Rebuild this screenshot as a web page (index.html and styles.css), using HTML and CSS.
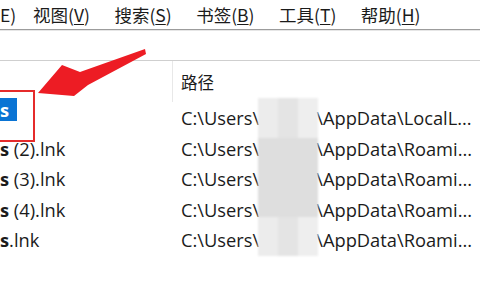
FILE: index.html
```html
<!DOCTYPE html>
<html lang="zh-CN">
<head>
    <meta charset="UTF-8">
    <title>搜索结果</title>
    <link rel="stylesheet" href="styles.css">
</head>
<body>
    <div class="window">
        <nav class="menubar">
            <span class="menu-item cut">E)</span>
            <span class="menu-item">视图(<u>V</u>)</span>
            <span class="menu-item">搜索(<u>S</u>)</span>
            <span class="menu-item">书签(<u>B</u>)</span>
            <span class="menu-item">工具(<u>T</u>)</span>
            <span class="menu-item">帮助(<u>H</u>)</span>
        </nav>
        <div class="toolbar"></div>

        <div class="list">
            <div class="list-head">
                <div class="col-name"></div>
                <div class="col-path">路径</div>
            </div>
            <div class="row">
                <div class="col-name"><b class="selected">s</b></div>
                <div class="col-path">C:\Users\<span class="hidden-user">xxxxx</span>\AppData\LocalL...</div>
            </div>
            <div class="row">
                <div class="col-name"><b>s</b> (2).lnk</div>
                <div class="col-path">C:\Users\<span class="hidden-user">xxxxx</span>\AppData\Roami...</div>
            </div>
            <div class="row">
                <div class="col-name"><b>s</b> (3).lnk</div>
                <div class="col-path">C:\Users\<span class="hidden-user">xxxxx</span>\AppData\Roami...</div>
            </div>
            <div class="row">
                <div class="col-name"><b>s</b> (4).lnk</div>
                <div class="col-path">C:\Users\<span class="hidden-user">xxxxx</span>\AppData\Roami...</div>
            </div>
            <div class="row">
                <div class="col-name"><b>s</b>.lnk</div>
                <div class="col-path">C:\Users\<span class="hidden-user">xxxxx</span>\AppData\Roami...</div>
            </div>
        </div>

        <!-- annotation -->
        <div class="mosaic">
            <span></span><span></span><span></span>
            <span></span><span></span><span></span>
            <span></span><span></span><span></span>
            <span></span><span></span><span></span>
        </div>
        <div class="mark-box"></div>
        <svg class="mark-arrow" width="160" height="110" viewBox="0 0 160 110">
            <polygon points="145,49 80,72 62,65 38,93 74,96 88,85 146,54" fill="#ed1c24"/>
        </svg>
    </div>
</body>
</html>
```

FILE: styles.css
```css
body {
    margin: 0;
    background: #fff;
    font-family: "Open Sans", "Noto Sans CJK SC", sans-serif;
    color: #1b1b1b;
}
.window {
    position: relative;
    width: 480px;
    height: 300px;
    overflow: hidden;
}
.menubar {
    display: flex;
    gap: 24.5px;
    height: 29px;
    align-items: center;
    font-family: "Noto Sans CJK SC", sans-serif;
    font-size: 17.5px;
    border-bottom: 1px solid #9c9c9c;
    box-shadow: 0 1px 0 #e6e6e6;
}
.menu-item {
    white-space: nowrap;
}
.menu-item u {
    text-decoration-thickness: 1px;
    text-underline-offset: 2px;
}
.menu-item.cut {
    width: 8.5px;
}
.toolbar {
    height: 30px;
    border-bottom: 1px solid #cfcfcf;
}
.list {
    font-size: 18.3px;
}
.list-head,
.row {
    display: grid;
    grid-template-columns: 172px 1fr;
}
.list-head {
    height: 41px;
}
.list-head .col-path {
    border-left: 1px solid #e8e8e8;
    padding: 9px 0 0 8px;
    font-family: "Noto Sans CJK SC", sans-serif;
    font-size: 16.5px;
}
.row {
    height: 30.5px;
    line-height: 30px;
    padding-top: 1px;
    box-sizing: border-box;
}
.row .col-path {
    padding-left: 9px;
    white-space: nowrap;
}
.col-name {
    white-space: nowrap;
}
.col-name b {
    font-weight: 700;
}
.selected {
    display: inline-block;
    background: #0a74d4;
    color: #fff;
    width: 17px;
    line-height: 23px;
    margin-top: -5px;
    vertical-align: top;
}
.hidden-user {
    color: transparent;
    display: inline-block;
    width: 57px;
}
.mosaic {
    position: absolute;
    left: 258px;
    top: 98px;
    width: 60px;
    height: 158px;
    display: grid;
    grid-template-columns: 20px 20px 20px;
    grid-auto-rows: 1fr;
    filter: blur(1px);
}
.mosaic span:nth-child(3n+1) { background: #ececec; }
.mosaic span:nth-child(3n+2) { background: #e4e4e4; }
.mosaic span:nth-child(3n) { background: #eeeeee; }
.mosaic span:nth-child(n+4):nth-child(-n+9) { background: #dedede; }
.mark-box {
    position: absolute;
    left: -2px;
    top: 90px;
    width: 33px;
    height: 48px;
    border: 2px solid #e52b2b;
}
.mark-arrow {
    position: absolute;
    left: 0;
    top: 0;
}
```
